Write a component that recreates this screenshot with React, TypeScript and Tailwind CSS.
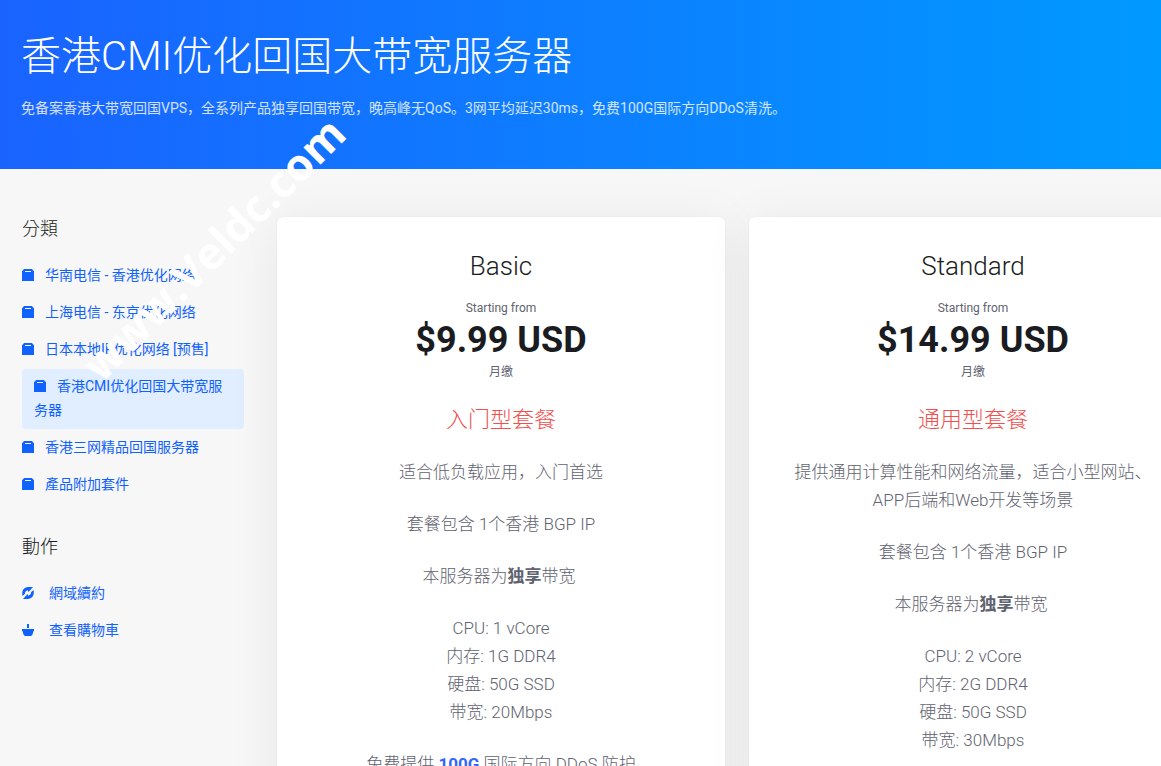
import type { ReactNode } from "react";
import clsx from "clsx";

type Category = { name: string; active?: boolean };

const categories: Category[] = [
  { name: "华南电信 - 香港优化网络" },
  { name: "上海电信 - 东京优化网络" },
  { name: "日本本地IP优化网络 [预售]" },
  { name: "香港CMI优化回国大带宽服务器", active: true },
  { name: "香港三网精品回国服务器" },
  { name: "產品附加套件" },
];

type Plan = {
  name: string;
  price: string;
  title: string;
  summary: string;
  specs: string[];
  note?: ReactNode;
};

const plans: Plan[] = [
  {
    name: "Basic",
    price: "$9.99 USD",
    title: "入门型套餐",
    summary: "适合低负载应用，入门首选",
    specs: ["CPU: 1 vCore", "内存: 1G DDR4", "硬盘: 50G SSD", "带宽: 20Mbps"],
    note: (
      <>
        免费提供 <strong className="font-bold text-[#3366ff]">100G</strong> 国际方向 DDoS 防护
      </>
    ),
  },
  {
    name: "Standard",
    price: "$14.99 USD",
    title: "通用型套餐",
    summary: "提供通用计算性能和网络流量，适合小型网站、APP后端和Web开发等场景",
    specs: ["CPU: 2 vCore", "内存: 2G DDR4", "硬盘: 50G SSD", "带宽: 30Mbps"],
  },
];

function BoxIcon() {
  return (
    <svg viewBox="0 0 12 12" className="mr-[11px] inline-block h-3 w-3 align-[-1px]" aria-hidden="true">
      <path
        fill="currentColor"
        fillRule="evenodd"
        d="M3 0h6c1 0 1.600.4 1.800 1.200C11.600 1.400 12 2 12 2.800V11.500a.5.5 0 0 1-.5.5H.5a.5.5 0 0 1-.5-.5V2.800C0 2 .4 1.400 1.200 1.200 1.400.4 2 0 3 0zM3 2v1h6V2z"
      />
    </svg>
  );
}

function RenewIcon() {
  return (
    <svg viewBox="0 0 12 12" className="mr-[15px] inline-block h-3 w-3 align-[-1px]" aria-hidden="true">
      <path fill="currentColor" d="M11 0 6.5 5 5.800 3.200C4 3.600 2.800 5 3 6.800L.6 9C-.8 4.500 1.600.4 6 0z" />
      <path fill="currentColor" d="M1 12 5.500 7 6.200 8.800C8 8.400 9.200 7 9 5.200L11.400 3C12.800 7.500 10.400 11.600 6 12z" />
    </svg>
  );
}

function BasketIcon() {
  return (
    <svg viewBox="0 0 12 12" className="mr-[15px] inline-block h-3 w-3 align-[-1px]" aria-hidden="true">
      <path fill="currentColor" d="M5 0h2v4H5z" />
      <path fill="currentColor" d="M0 5h12v2h-.5l-1 3.500A2 2 0 0 1 8.600 12H3.400a2 2 0 0 1-1.900-1.500L.5 7H0z" />
    </svg>
  );
}

function Sidebar() {
  return (
    <aside className="w-[222px] shrink-0">
      <h2 className="mb-[17px] font-['Roboto','Noto_Sans_CJK_TC',sans-serif] text-lg leading-6 font-light text-[#1a1c21]">
        分類
      </h2>
      <ul className="text-sm leading-6 text-[#1062fe]">
        {categories.map((c) => (
          <li key={c.name} className="mb-px">
            <a href="#" className={clsx("block pt-[5px] pb-[7px]", c.active && "rounded bg-[#e1eeff] px-3")}>
              <BoxIcon />
              {c.name}
            </a>
          </li>
        ))}
      </ul>

      <h2 className="mt-8 mb-[17px] font-['Roboto','Noto_Sans_CJK_TC',sans-serif] text-lg leading-6 font-light text-[#1a1c21]">
        動作
      </h2>
      <ul className="font-['Roboto','Noto_Sans_CJK_TC',sans-serif] text-sm leading-6 text-[#1062fe]">
        <li className="mb-px">
          <a href="#" className="block pt-[5px] pb-[7px]">
            <RenewIcon />
            網域續約
          </a>
        </li>
        <li className="mb-px">
          <a href="#" className="block pt-[5px] pb-[7px]">
            <BasketIcon />
            查看購物車
          </a>
        </li>
      </ul>
    </aside>
  );
}

function PlanCard({ plan }: { plan: Plan }) {
  return (
    <article className="w-[448px] shrink-0 rounded-md bg-white px-8 py-8 text-center text-[#5f6370] shadow-[0_6px_50px_rgba(0,0,0,0.07),0_0_2px_rgba(0,0,0,0.05)]">
      <h3 className="text-[26px] leading-[34px] font-light text-[#1a1c21]">{plan.name}</h3>
      <div className="mt-[17px] text-xs leading-4">Starting from</div>
      <div className="text-4xl leading-[48px] font-bold text-[#1a1c21]">{plan.price}</div>
      <div className="text-xs leading-4">月缴</div>
      <div className="mt-6 text-[22px] leading-8 font-light text-[#f0504e]">{plan.title}</div>

      <div className="mt-[22px] flex flex-col gap-6 text-[17px] leading-7 font-light">
        <p>{plan.summary}</p>
        <p>套餐包含 1个香港 BGP IP</p>
        <p>
          本服务器为<strong className="font-bold">独享</strong>带宽&nbsp;
        </p>
        <ul>
          {plan.specs.map((s) => (
            <li key={s}>{s}</li>
          ))}
        </ul>
        {plan.note && <p>{plan.note}</p>}
      </div>
    </article>
  );
}

export default function App() {
  return (
    <div className="relative overflow-hidden bg-[#f7f7f7] font-['Roboto','Noto_Sans_CJK_SC',sans-serif]">
      <header className="bg-linear-to-r/srgb from-[#1a63ff] to-[#0099ff] px-[21px] pt-[33px] pb-[49px] text-white">
        <h1 className="text-[40px] leading-[48px] font-light">香港CMI优化回国大带宽服务器</h1>
        <p className="mt-[15px] text-sm leading-6 text-white/80">
          免备案香港大带宽回国VPS，全系列产品独享回国带宽，晚高峰无QoS。3网平均延迟30ms，免费100G国际方向DDoS清洗。
        </p>
      </header>

      <main className="flex gap-[33px] px-[22px] pt-12 pb-12">
        <Sidebar />
        <div className="flex gap-6">
          {plans.map((p) => (
            <PlanCard key={p.name} plan={p} />
          ))}
        </div>
      </main>

      {/* watermark */}
      <div className="pointer-events-none absolute top-[226px] left-[33px] w-[360px] -rotate-45 text-center font-['Open_Sans',sans-serif] text-[44px] leading-[44px] font-bold text-white">
        www.Veldc.com
      </div>
    </div>
  );
}
